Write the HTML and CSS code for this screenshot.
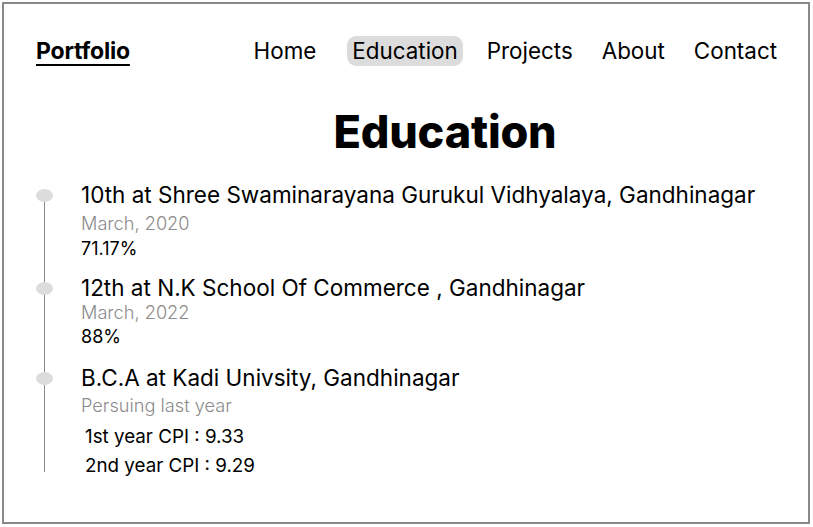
FILE: index.html
```html
<!DOCTYPE html>
<html>
<head>
<meta charset="utf-8">
<link rel="stylesheet" href="styles.css">
</head>
<body>
<div class="frame">
  <header class="topbar">
    <a class="logo">Portfolio</a>
    <nav class="nav">
      <a class="nav-link home">Home</a>
      <a class="nav-link active">Education</a>
      <a class="nav-link">Projects</a>
      <a class="nav-link">About</a>
      <a class="nav-link">Contact</a>
    </nav>
  </header>
  <h1 class="title">Education</h1>
  <div class="timeline">
    <div class="item item-1">
      <span class="dot"></span>
      <div class="item-title">10th at Shree Swaminarayana Gurukul Vidhyalaya, Gandhinagar</div>
      <div class="item-date">March, 2020</div>
      <div class="item-score">71.17%</div>
    </div>
    <div class="item item-2">
      <span class="dot"></span>
      <div class="item-title">12th at N.K School Of Commerce , Gandhinagar</div>
      <div class="item-date tight">March, 2022</div>
      <div class="item-score">88%</div>
    </div>
    <div class="item item-3">
      <span class="dot"></span>
      <div class="item-title">B.C.A at Kadi Univsity, Gandhinagar</div>
      <div class="item-date loose">Persuing last year</div>
      <div class="item-cpi first">1st year CPI : 9.33</div>
      <div class="item-cpi">2nd year CPI : 9.29</div>
    </div>
  </div>
</div>
</body>
</html>
```

FILE: styles.css
```css
* { box-sizing: border-box; }
html, body { margin: 0; padding: 0; background: #fff; }
body {
  font-family: Inter, "Noto Sans", sans-serif;
  color: #000;
}
.frame {
  margin: 2px;
  width: 808px;
  height: 522px;
  border: 2px solid #898989;
  padding: 0 26px 0 32px;
}
.topbar {
  display: flex;
  align-items: center;
  justify-content: space-between;
  padding-top: 32px;
}
.logo {
  font-size: 23px;
  font-weight: 700;
  line-height: 30px;
  text-decoration: underline;
  text-underline-offset: 5px;
  text-decoration-thickness: 2px;
  letter-spacing: -0.2px;
}
.nav {
  display: flex;
  align-items: center;
  gap: 19px;
}
.nav-link {
  font-size: 22.4px;
  padding: 3px 5px;
  border-radius: 9px;
  line-height: 24px;
}
.nav-link.home { margin-right: 7px; }
.nav-link.active { background: #dcdcdc; }
.title {
  margin: 39px 0 0 72px;
  text-align: center;
  font-size: 45px;
  font-weight: 800;
  line-height: 54px;
  letter-spacing: -0.2px;
}
.timeline {
  margin: 22px 0 0 0;
  padding-left: 45px;
  position: relative;
}
.timeline::before {
  content: "";
  position: absolute;
  left: 8px;
  top: 14px;
  bottom: 8px;
  width: 1px;
  background: #8a8a8a;
}
.item { position: relative; }
.item-1 { padding-bottom: 13px; }
.item-2 { padding-bottom: 15px; }
.dot {
  position: absolute;
  left: -45px;
  top: 8px;
  width: 17px;
  height: 13px;
  border-radius: 50%;
  background: #dcdcdc;
}
.item-title {
  font-size: 22.5px;
  line-height: 28px;
}
.item-date {
  font-size: 18.2px;
  font-weight: 300;
  color: #8c8c8c;
  line-height: 24px;
  margin-top: 2px;
}
.item-date.tight { margin-top: -1px; line-height: 22px; }
.item-date.loose { margin-top: 1px; }
.item-score {
  font-size: 18px;
  line-height: 24px;
  margin-top: 2px;
}
.item-cpi {
  font-size: 18.8px;
  line-height: 28px;
  padding-left: 4px;
  margin-top: 1px;
}
.item-cpi.first { margin-top: 6px; }
```
